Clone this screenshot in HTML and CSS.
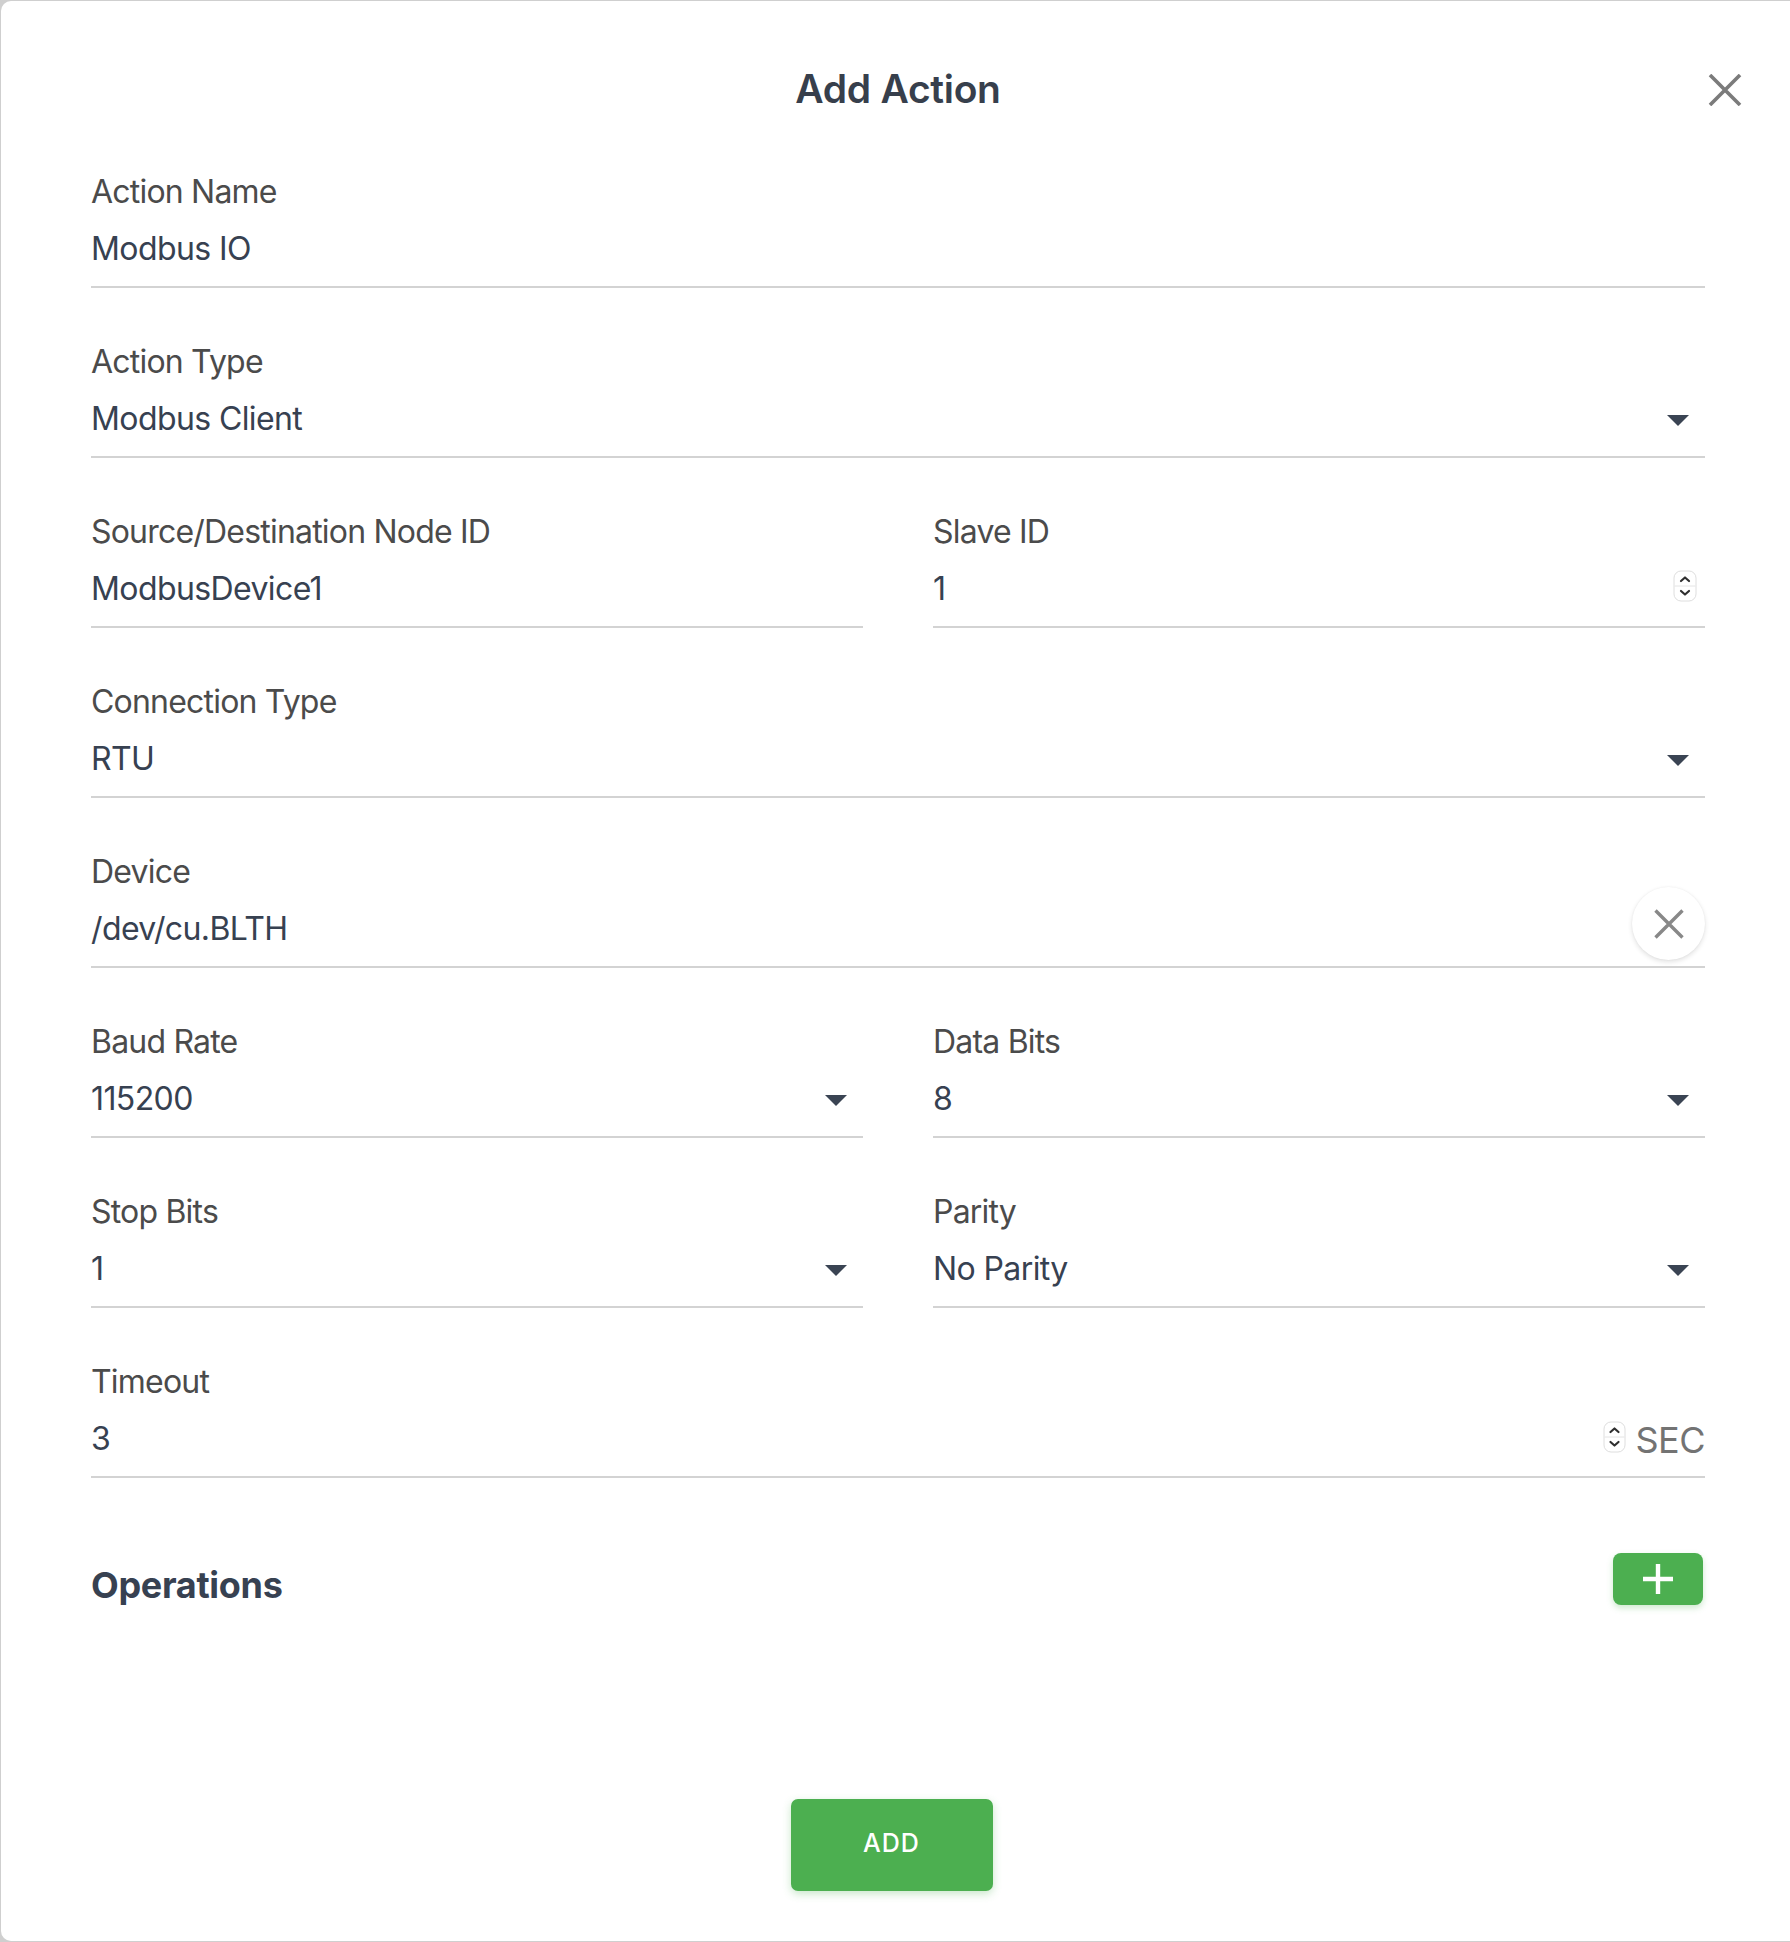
FILE: index.html
```html
<!DOCTYPE html>
<html lang="en">
<head>
<meta charset="utf-8">
<title>Add Action</title>
<link rel="stylesheet" href="styles.css">
</head>
<body>
<div class="dialog">
  <div class="content">
    <header class="header">
      <h1 class="title">Add Action</h1>
      <button class="close" aria-label="Close">
        <svg width="34" height="32" viewBox="0 0 34 32"><path d="M2 1 L32 31 M32 1 L2 31" stroke="#7b7b7b" stroke-width="3.6" fill="none"/></svg>
      </button>
    </header>

    <div class="field">
      <div class="label">Action Name</div>
      <div class="input"><span class="value">Modbus IO</span></div>
    </div>

    <div class="field">
      <div class="label">Action Type</div>
      <div class="input"><span class="value">Modbus Client</span><span class="caret"></span></div>
    </div>

    <div class="row">
      <div class="field">
        <div class="label">Source/Destination Node ID</div>
        <div class="input"><span class="value">ModbusDevice1</span></div>
      </div>
      <div class="field">
        <div class="label">Slave ID</div>
        <div class="input"><span class="value">1</span>
          <svg class="spin spin-slave" width="24" height="32" viewBox="0 0 24 32"><rect x="1" y="1" width="22" height="30" rx="7" fill="#fff" stroke="#dedede"/><line x1="1.5" y1="16" x2="22.5" y2="16" stroke="#e4e4e4"/><path d="M8 11 L12 7.5 L16 11" stroke="#2f2f2f" stroke-width="2.2" fill="none" stroke-linecap="round" stroke-linejoin="round"/><path d="M8 21 L12 24.5 L16 21" stroke="#2f2f2f" stroke-width="2.2" fill="none" stroke-linecap="round" stroke-linejoin="round"/></svg>
        </div>
      </div>
    </div>

    <div class="field">
      <div class="label">Connection Type</div>
      <div class="input"><span class="value">RTU</span><span class="caret"></span></div>
    </div>

    <div class="field">
      <div class="label">Device</div>
      <div class="input"><span class="value">/dev/cu.BLTH</span>
        <button class="clear" aria-label="Clear">
          <svg width="30" height="30" viewBox="0 0 30 30"><path d="M1.5 1.5 L28.5 28.5 M28.5 1.5 L1.5 28.5" stroke="#888" stroke-width="3.4" fill="none"/></svg>
        </button>
      </div>
    </div>

    <div class="row">
      <div class="field">
        <div class="label">Baud Rate</div>
        <div class="input"><span class="value">115200</span><span class="caret"></span></div>
      </div>
      <div class="field">
        <div class="label">Data Bits</div>
        <div class="input"><span class="value">8</span><span class="caret"></span></div>
      </div>
    </div>

    <div class="row">
      <div class="field">
        <div class="label">Stop Bits</div>
        <div class="input"><span class="value">1</span><span class="caret"></span></div>
      </div>
      <div class="field">
        <div class="label">Parity</div>
        <div class="input"><span class="value">No Parity</span><span class="caret"></span></div>
      </div>
    </div>

    <div class="field">
      <div class="label">Timeout</div>
      <div class="input"><span class="value">3</span>
        <svg class="spin spin-timeout" width="23" height="32" viewBox="0 0 23 32"><rect x="1" y="1" width="21" height="30" rx="7" fill="#fff" stroke="#dedede"/><line x1="1.5" y1="16" x2="21.5" y2="16" stroke="#e4e4e4"/><path d="M7.5 11 L11.5 7.5 L15.5 11" stroke="#2f2f2f" stroke-width="2.2" fill="none" stroke-linecap="round" stroke-linejoin="round"/><path d="M7.5 21 L11.5 24.5 L15.5 21" stroke="#2f2f2f" stroke-width="2.2" fill="none" stroke-linecap="round" stroke-linejoin="round"/></svg>
        <span class="suffix">SEC</span>
      </div>
    </div>

    <div class="ops">
      <h2 class="ops-title">Operations</h2>
      <button class="plus" aria-label="Add operation">
        <svg width="30" height="30" viewBox="0 0 30 30"><path d="M15 0 V30 M0 15 H30" stroke="#fff" stroke-width="4.4" fill="none"/></svg>
      </button>
    </div>

    <div class="footer">
      <button class="add">ADD</button>
    </div>
  </div>
</div>
</body>
</html>
```

FILE: styles.css
```css
html, body {
  margin: 0;
  padding: 0;
  overflow: hidden;
  background: #cfcfcf;
}

body {
  font-family: Inter, "Noto Sans", "Liberation Sans", sans-serif;
  height: 1942px;
}

.dialog {
  margin: 1px 0 0 1px;
  width: 1800px;
  height: 1940px;
  background: #fff;
  border-radius: 10px;
  box-sizing: border-box;
  padding: 64px 0 0 90px;
}

.content {
  width: 1614px;
}

.header {
  position: relative;
  text-align: center;
  margin-bottom: 5px;
}

.title {
  margin: 0;
  font-size: 39px;
  line-height: 48px;
  font-weight: 600;
  color: #373f4c;
  letter-spacing: -0.3px;
}

.close {
  position: absolute;
  right: -37px;
  top: 9px;
  border: 0;
  padding: 0;
  background: none;
  line-height: 0;
}

.field {
  padding-top: 54px;
  border-bottom: 2px solid #d3d3d3;
}

.label {
  font-size: 32px;
  line-height: 40px;
  color: #4b4b4b;
  letter-spacing: -0.8px;
  margin-bottom: 13px;
}

.input {
  display: flex;
  align-items: center;
  height: 48px;
  padding-bottom: 13px;
}

.value {
  flex: 1;
  font-size: 32px;
  line-height: 48px;
  color: #374151;
  letter-spacing: -0.6px;
}

.caret {
  width: 0;
  height: 0;
  border-left: 11px solid transparent;
  border-right: 11px solid transparent;
  border-top: 11px solid #3a4453;
  margin-right: 16px;
  margin-top: 2px;
}

.row {
  display: grid;
  grid-template-columns: 1fr 1fr;
  column-gap: 70px;
}

.spin-slave {
  margin-right: 8px;
  margin-top: -7px;
}

.spin-timeout {
  margin-top: -4px;
}

.suffix {
  font-size: 36px;
  line-height: 48px;
  color: #737373;
  margin-left: 9px;
  margin-top: 2px;
  letter-spacing: -0.5px;
}

.clear {
  width: 73px;
  height: 73px;
  border-radius: 50%;
  border: 0;
  background: #fff;
  box-shadow: 0 2px 5px rgba(0, 0, 0, 0.12), 0 0 2px rgba(0, 0, 0, 0.05);
  display: flex;
  align-items: center;
  justify-content: center;
  padding: 0;
  margin: -18px 0 -7px;
}

.ops {
  display: flex;
  justify-content: space-between;
  align-items: flex-start;
  margin-top: 75px;
}

.ops-title {
  margin: 10px 0 0;
  font-size: 36px;
  line-height: 44px;
  font-weight: 700;
  color: #374151;
  letter-spacing: -0.3px;
}

.plus {
  width: 90px;
  height: 52px;
  margin-right: 2px;
  border: 0;
  border-radius: 8px;
  background: #4caf50;
  box-shadow: 0 3px 6px rgba(76, 175, 80, 0.28);
  display: flex;
  align-items: center;
  justify-content: center;
  padding: 0;
}

.footer {
  display: flex;
  justify-content: center;
  padding-right: 13px;
  margin-top: 192px;
}

.add {
  width: 202px;
  height: 92px;
  border: 0;
  border-radius: 7px;
  background: #4caf50;
  color: #fff;
  font-family: Inter, "Noto Sans", "Liberation Sans", sans-serif;
  font-size: 25px;
  font-weight: 500;
  letter-spacing: 1px;
  box-shadow: 0 3px 8px rgba(76, 175, 80, 0.3);
  padding: 0 0 4px;
}
```
